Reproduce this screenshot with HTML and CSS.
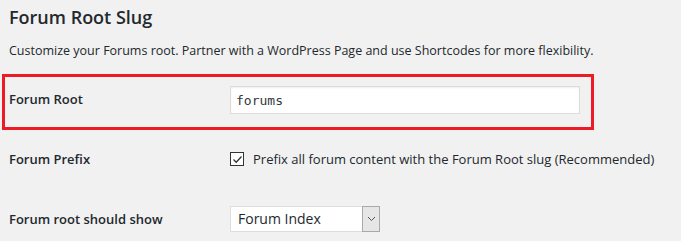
FILE: index.html
```html
<!DOCTYPE html>
<html lang="en">
<head>
<meta charset="utf-8">
<title>Forum Root Slug</title>
<link rel="stylesheet" href="styles.css">
</head>
<body>
<div class="wrap">
  <h2 class="title">Forum Root Slug</h2>
  <p class="desc">Customize your Forums root. Partner with a WordPress Page and use Shortcodes for more flexibility.</p>

  <div class="row highlight">
    <div class="label">Forum Root</div>
    <div class="field"><input class="text" type="text" value="forums"></div>
  </div>

  <div class="row prefix">
    <div class="label">Forum Prefix</div>
    <div class="field">
      <label class="check">
        <span class="box"><svg width="11" height="11" viewBox="0 0 11 11"><path d="M1.5 5.5 L4.2 8.2 L9.5 2.5" fill="none" stroke="#333" stroke-width="1.3"/></svg></span>
        <span>Prefix all forum content with the Forum Root slug (Recommended)</span>
      </label>
    </div>
  </div>

  <div class="row show">
    <div class="label">Forum root should show</div>
    <div class="field">
      <div class="select">
        <span class="value">Forum Index</span>
        <span class="arrow"><svg width="9" height="6" viewBox="0 0 9 6"><path d="M1 1 L4.5 4.5 L8 1" fill="none" stroke="#555" stroke-width="1"/></svg></span>
      </div>
    </div>
  </div>
</div>
</body>
</html>
```

FILE: styles.css
```css
html, body {
  margin: 0;
  padding: 0;
  background: #f1f1f1;
}
body {
  font-family: "Open Sans", "Noto Sans", sans-serif;
  font-size: 13px;
  color: #23282d;
  width: 681px;
  height: 241px;
  overflow: hidden;
}
.wrap {
  padding-top: 1px;
}
.title {
  margin: 4px 0 0 9px;
  font-size: 18px;
  font-weight: 600;
  line-height: 24px;
}
.desc {
  margin: 12px 0 0 9px;
  font-size: 12.5px;
  line-height: 20px;
}
.row {
  display: flex;
  align-items: flex-start;
  padding-left: 9px;
}
.label {
  width: 221px;
  flex: none;
  font-weight: 600;
  line-height: 20px;
}
.highlight {
  box-sizing: border-box;
  margin-top: 13px;
  margin-left: 2px;
  width: 592px;
  height: 56px;
  border: 3px solid #ed1c24;
  padding: 9px 0 0 4px;
}
.highlight .label {
  padding-top: 3px;
}
.text {
  box-sizing: border-box;
  width: 350px;
  height: 28px;
  margin: 0;
  padding: 0 5px;
  border: 1px solid #dcdcdc;
  box-shadow: inset 0 1px 2px rgba(0,0,0,.07);
  background: #fff;
  font-family: "DejaVu Sans Mono", monospace;
  font-size: 13px;
  color: #32373c;
  outline: none;
}
.prefix {
  margin-top: 19px;
}
.check {
  display: flex;
  align-items: center;
  gap: 9px;
  line-height: 20px;
}
.box {
  box-sizing: border-box;
  width: 14px;
  height: 14px;
  border: 1px solid #333;
  background: #fff;
  display: flex;
  align-items: center;
  justify-content: center;
}
.show {
  margin-top: 37px;
}
.show .label {
  padding-top: 3px;
}
.select {
  box-sizing: border-box;
  width: 150px;
  height: 26px;
  border: 1px solid #ddd;
  background: #fff;
  display: flex;
  align-items: stretch;
}
.select .value {
  flex: 1;
  padding-left: 7px;
  line-height: 24px;
  font-size: 14px;
}
.select .arrow {
  box-sizing: border-box;
  width: 18px;
  margin: -1px -1px -1px 0;
  border: 1px solid #aaa;
  background: #e6e6e6;
  display: flex;
  align-items: center;
  justify-content: center;
}
```
